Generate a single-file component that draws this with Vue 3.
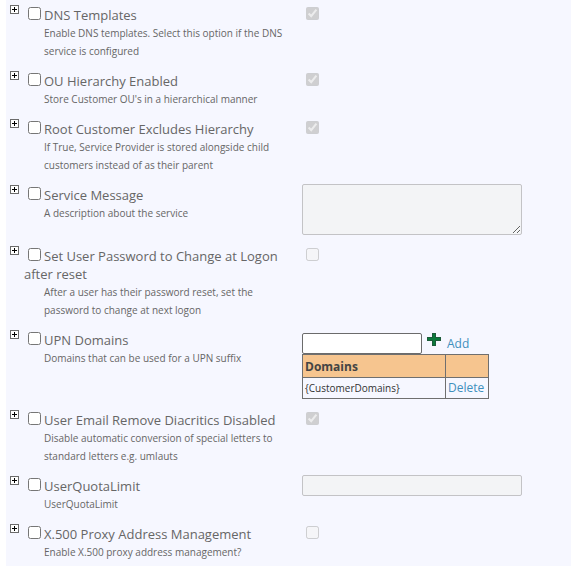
<script setup>
import { ref } from 'vue';

const settings = ref([
  { id: 'dns', title: 'DNS Templates', description: 'Enable DNS templates. Select this option if the DNS service is configured', type: 'check', value: true, selected: false },
  { id: 'ou', title: 'OU Hierarchy Enabled', description: "Store Customer OU's in a hierarchical manner", type: 'check', value: true, selected: false },
  { id: 'root', title: 'Root Customer Excludes Hierarchy', description: 'If True, Service Provider is stored alongside child customers instead of as their parent', type: 'check', value: true, selected: false },
  { id: 'message', title: 'Service Message', description: 'A description about the service', type: 'area', value: '', selected: false },
  { id: 'password', title: 'Set User Password to Change at Logon after reset', description: 'After a user has their password reset, set the password to change at next logon', type: 'check', value: false, selected: false },
  { id: 'upn', title: 'UPN Domains', description: 'Domains that can be used for a UPN suffix', type: 'domains', value: '', selected: false },
  { id: 'diacritics', title: 'User Email Remove Diacritics Disabled', description: 'Disable automatic conversion of special letters to standard letters e.g. umlauts', type: 'check', value: true, selected: false },
  { id: 'quota', title: 'UserQuotaLimit', description: 'UserQuotaLimit', type: 'text', value: '', selected: false },
  { id: 'x500', title: 'X.500 Proxy Address Management', description: 'Enable X.500 proxy address management?', type: 'check', value: false, selected: false }
]);

const domains = ref(['{CustomerDomains}']);

const addDomain = (setting) => {
  if (!setting.value) return;
  domains.value.push(setting.value);
  setting.value = '';
};

const removeDomain = (index) => {
  domains.value.splice(index, 1);
};
</script>

<template>
  <div class="settings">
    <div v-for="setting in settings" :key="setting.id" class="setting">
      <button type="button" class="expand" :aria-label="'Expand ' + setting.title">
        <svg viewBox="0 0 9 9" width="9" height="9" shape-rendering="crispEdges">
          <rect width="9" height="9" fill="#6b6b6b" />
          <rect x="1" y="1" width="7" height="7" fill="#fff" />
          <path d="M2 4h5v1H2zM4 2h1v5H4z" fill="#000" />
        </svg>
      </button>

      <div class="info">
        <div class="title">
          <input :id="setting.id" v-model="setting.selected" type="checkbox" class="select" />
          <label :for="setting.id">{{ setting.title }}</label>
        </div>
        <p class="description">{{ setting.description }}</p>
      </div>

      <div class="value" :class="'value-' + setting.type">
        <input
          v-if="setting.type === 'check'"
          v-model="setting.value"
          type="checkbox"
          class="flag"
          :aria-label="setting.title"
          disabled
        />
        <textarea
          v-else-if="setting.type === 'area'"
          v-model="setting.value"
          class="field area"
          :aria-label="setting.title"
          disabled
        ></textarea>
        <input
          v-else-if="setting.type === 'text'"
          v-model="setting.value"
          type="text"
          class="field"
          :aria-label="setting.title"
          disabled
        />
        <template v-else>
          <div class="add-row">
            <input v-model="setting.value" type="text" class="domain-input" aria-label="Domain" />
            <svg class="plus" viewBox="0 0 14 14" width="14" height="14" shape-rendering="crispEdges">
              <path d="M5 0h4v4h5v4H9v5H5V8H0V4h5z" fill="#1d5c3a" />
              <path d="M6 1h2v4h5v2H8v5H6V7H1V5h5z" fill="#0c7a3c" />
            </svg>
            <a href="#" @click.prevent="addDomain(setting)">Add</a>
          </div>
          <table class="domains">
            <thead>
              <tr>
                <th>Domains</th>
                <th></th>
              </tr>
            </thead>
            <tbody>
              <tr v-for="(domain, index) in domains" :key="domain">
                <td>{{ domain }}</td>
                <td class="action"><a href="#" @click.prevent="removeDomain(index)">Delete</a></td>
              </tr>
            </tbody>
          </table>
        </template>
      </div>
    </div>
  </div>
</template>

<style>
body {
  margin: 0;
  background: #fff;
}
</style>

<style scoped>
.settings {
  margin: 0 2px 0 6px;
  background: #f6f7ff;
  color: #666;
  font-family: "Segoe UI", "Open Sans", "Noto Sans", sans-serif;
  font-size: 13px;
  line-height: 18px;
}
.setting {
  display: grid;
  grid-template-columns: 18px 266px 1fr;
  align-items: start;
}
.setting:last-child .info {
  padding-bottom: 5px;
}
.expand {
  display: block;
  width: 9px;
  height: 9px;
  margin: 5px 0 0 4px;
  padding: 0;
  border: 0;
  background: none;
}
.expand svg {
  display: block;
}
.info {
  padding: 6px 0;
}
.select {
  float: left;
  width: 13px;
  height: 13px;
  margin: 1px 3px 0 4px;
}
.description {
  margin: 0 0 0 20px;
  font-size: 10px;
}
.value {
  padding: 4px 0 6px 12px;
}
.value-check {
  padding: 7px 0 0 16px;
}
.value-domains {
  padding-top: 8px;
}
.flag {
  display: block;
  width: 13px;
  height: 13px;
  margin: 0;
}
.field {
  display: block;
  box-sizing: border-box;
  width: 220px;
  height: 21px;
  border: 1px solid #c3c3c6;
  border-radius: 2px;
  background: #f3f4f6;
}
.area {
  height: 51px;
  resize: both;
}
.add-row {
  display: flex;
}
.domain-input {
  box-sizing: border-box;
  width: 120px;
  height: 21px;
  border: 1px solid #6b6b6b;
  border-radius: 2px;
  background: #fff;
}
.plus {
  margin: 0 6px 0 5px;
}
a {
  color: #3f8fbd;
  font-size: 12px;
  text-decoration: none;
}
.add-row a {
  padding-top: 2px;
}
.domains {
  width: 187px;
  border-collapse: collapse;
  color: #333;
  font-size: 10px;
}
.domains th,
.domains td {
  height: 18px;
  padding: 1px 2px;
  border: 1px solid #6f6f6f;
  text-align: left;
}
.domains th {
  padding: 3px 2px 1px;
  background: #f6c58f;
  color: #444;
  font-size: 12px;
}
.domains .action {
  width: 38px;
}
</style>
